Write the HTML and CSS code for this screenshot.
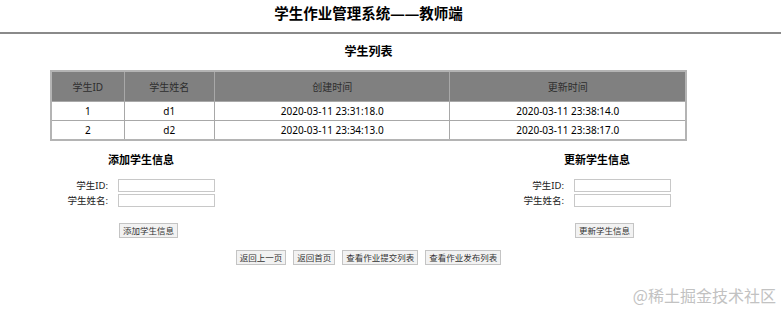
FILE: index.html
```html
<!DOCTYPE html>
<html>
<head>
    <title>学生作业管理系统——教师端</title>
    <link rel="stylesheet" href="styles.css">
</head>
<body>
    <div class="header">
        <h1 class="title">学生作业管理系统——教师端</h1>
    </div>
    <div class="main">
        <h2 class="list-title">学生列表</h2>
        <table class="students">
            <tr>
                <th class="col-id">学生ID</th>
                <th class="col-name">学生姓名</th>
                <th class="col-time">创建时间</th>
                <th class="col-time">更新时间</th>
            </tr>
            <tr>
                <td>1</td>
                <td>d1</td>
                <td>2020-03-11 23:31:18.0</td>
                <td>2020-03-11 23:38:14.0</td>
            </tr>
            <tr>
                <td>2</td>
                <td>d2</td>
                <td>2020-03-11 23:34:13.0</td>
                <td>2020-03-11 23:38:17.0</td>
            </tr>
        </table>

        <div class="forms">
            <div class="form-box">
                <h3 class="form-title">添加学生信息</h3>
                <div class="fields">
                    <label>学生ID:</label>
                    <input type="text" class="field">
                    <label>学生姓名:</label>
                    <input type="text" class="field">
                </div>
                <button class="btn form-btn">添加学生信息</button>
            </div>
            <div class="form-box">
                <h3 class="form-title">更新学生信息</h3>
                <div class="fields">
                    <label>学生ID:</label>
                    <input type="text" class="field">
                    <label>学生姓名:</label>
                    <input type="text" class="field">
                </div>
                <button class="btn form-btn">更新学生信息</button>
            </div>
        </div>

        <div class="nav">
            <button class="btn">返回上一页</button>
            <button class="btn">返回首页</button>
            <button class="btn">查看作业提交列表</button>
            <button class="btn">查看作业发布列表</button>
        </div>
    </div>
    <div class="watermark">@稀土掘金技术社区</div>
</body>
</html>
```

FILE: styles.css
```css
body {
    margin: 0;
    width: 781px;
    height: 310px;
    position: relative;
    overflow: hidden;
    font-family: "Noto Sans", "Noto Sans CJK SC", sans-serif;
    color: #000;
    background: #fff;
}
.header {
    height: 32px;
    border-bottom: 2px solid #8a8a8a;
}
.title {
    margin: 0;
    width: 737px;
    text-align: center;
    font-size: 14.5px;
    line-height: 26px;
    font-weight: bold;
}
.main {
    width: 737px;
}
.list-title {
    margin: 10px 0 0 0;
    text-align: center;
    font-size: 12px;
    line-height: 16px;
    font-weight: bold;
}
.students {
    margin: 10px 0 0 50px;
    width: 637px;
    border-collapse: collapse;
    border: 2px solid #b4b4b4;
    font-size: 10px;
}
.students th,
.students td {
    border: 1px solid #a8a8a8;
    text-align: center;
    padding: 0;
}
.students th {
    background: #808080;
    color: #2e2e2e;
    font-weight: normal;
    height: 29px;
}
.students td {
    height: 18px;
}
.col-id { width: 72px; }
.col-name { width: 90px; }
.col-time { width: 236px; }
.forms {
    display: flex;
    gap: 296px;
    margin: 12px 0 0 60px;
}
.form-box {
    width: 160px;
}
.form-title {
    margin: 0 0 12px 48px;
    font-size: 11px;
    line-height: 14px;
    font-weight: bold;
}
.fields {
    display: grid;
    grid-template-columns: 48px 97px;
    column-gap: 10px;
    row-gap: 2px;
    font-size: 9.5px;
    color: #222;
}
.fields label {
    text-align: right;
    line-height: 13px;
}
.field {
    box-sizing: border-box;
    width: 97px;
    height: 13px;
    border: 1px solid #c8c8c8;
    padding: 0;
    margin: 0;
}
.btn {
    font-family: "Noto Sans CJK SC", sans-serif;
    font-size: 8.5px;
    line-height: 11px;
    padding: 1px 3px;
    border: 1px solid #c4c4c4;
    background: #f2f2f2;
    color: #333;
}
.form-btn {
    margin: 16px 0 0 59px;
}
.nav {
    display: flex;
    justify-content: center;
    gap: 7px;
    margin-top: 11px;
}
.watermark {
    position: absolute;
    right: 5px;
    top: 285px;
    font-family: "Noto Sans CJK SC", sans-serif;
    font-size: 16px;
    line-height: 20px;
    color: #c2c2c2;
}
```
